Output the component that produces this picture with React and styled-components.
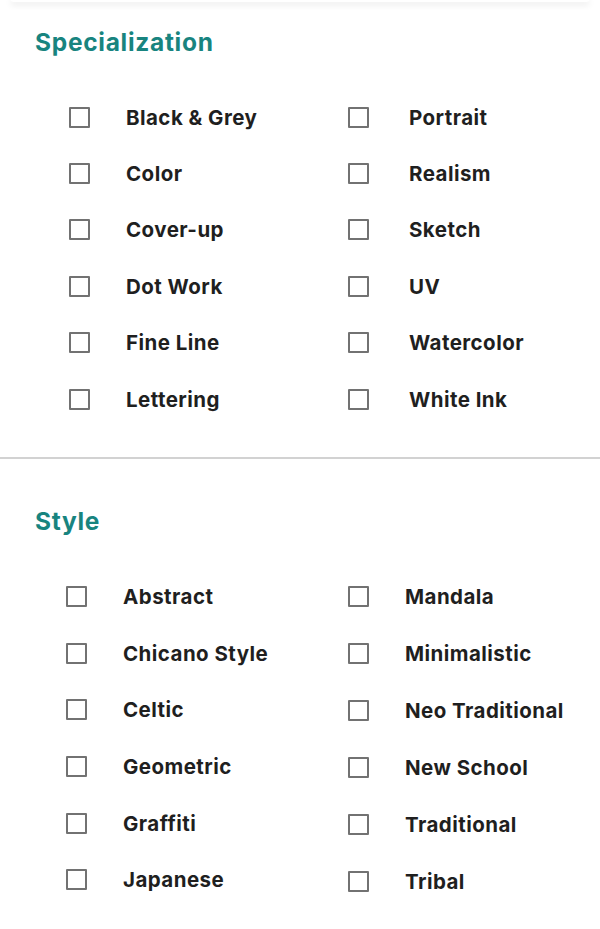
import styled, { createGlobalStyle } from "styled-components"

const GlobalStyle = createGlobalStyle`
    body {
        margin: 0;
        background: #ffffff;
        font-family: Inter, "Noto Sans", sans-serif;
    }
`

const Page = styled.div`
    width: 600px;
    background: #ffffff;
    overflow: hidden;
`

const TopCard = styled.div`
    height: 4px;
    margin: -2px 10px 0;
    border-radius: 0 0 22px 22px;
    background: #ffffff;
    box-shadow: 0 3px 6px rgba(0, 0, 0, 0.09);
`

const Section = styled.section`
    padding: ${(p) => p.$pad};
`

const Heading = styled.h2`
    margin: 0 0 0 35px;
    font-size: 24.5px;
    line-height: 28px;
    font-weight: 700;
    color: #18847f;
    letter-spacing: 0.7px;
`

const Grid = styled.div`
    display: grid;
    grid-template-columns: ${(p) => p.$left}px 1fr;
    margin-top: 33px;
    padding-left: ${(p) => p.$indent}px;
`

const Column = styled.div`
    display: flex;
    flex-direction: column;
`

const Row = styled.label`
    display: flex;
    align-items: center;
    height: ${(p) => p.$h}px;
    gap: ${(p) => p.$gap}px;
`

const Box = styled.span`
    box-sizing: border-box;
    width: 21px;
    height: 21px;
    border: 2.5px solid #727272;
    border-radius: 1px;
    flex-shrink: 0;
`

const Label = styled.span`
    font-size: 20.5px;
    font-weight: 700;
    color: #1f1f1f;
    letter-spacing: 0.45px;
`

const Divider = styled.hr`
    margin: 30px 0 0;
    border: none;
    height: 2px;
    background: #d2d2d2;
`

const specLeft = ["Black & Grey", "Color", "Cover-up", "Dot Work", "Fine Line", "Lettering"]
const specRight = ["Portrait", "Realism", "Sketch", "UV", "Watercolor", "White Ink"]
const styleLeft = ["Abstract", "Chicano Style", "Celtic", "Geometric", "Graffiti", "Japanese"]
const styleRight = ["Mandala", "Minimalistic", "Neo Traditional", "New School", "Traditional", "Tribal"]

function CheckColumn({ items, gap, h }) {
    return (
        <Column>
            {items.map((item) => (
                <Row key={item} $gap={gap} $h={h}>
                    <Box />
                    <Label>{item}</Label>
                </Row>
            ))}
        </Column>
    )
}

export default function App() {
    return (
        <Page>
            <GlobalStyle />
            <TopCard />
            <Section $pad="26px 0 0">
                <Heading>Specialization</Heading>
                <Grid $indent={69} $left={279}>
                    <CheckColumn items={specLeft} gap={36} h={56.4} />
                    <CheckColumn items={specRight} gap={40} h={56.4} />
                </Grid>
            </Section>
            <Divider />
            <Section $pad="48px 0 40px">
                <Heading>Style</Heading>
                <Grid $indent={66} $left={282}>
                    <CheckColumn items={styleLeft} gap={36} h={56.6} />
                    <CheckColumn items={styleRight} gap={36} h={57} />
                </Grid>
            </Section>
        </Page>
    )
}
